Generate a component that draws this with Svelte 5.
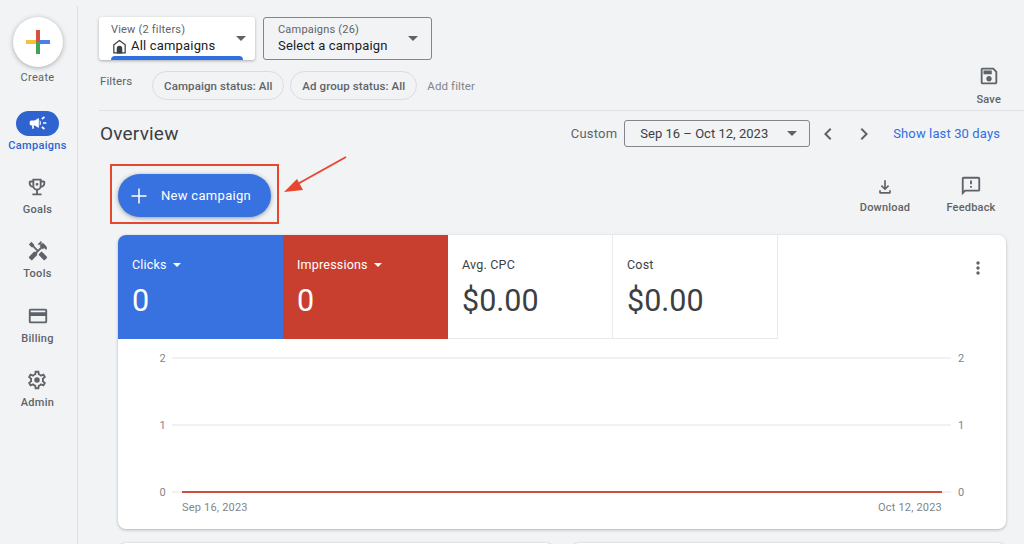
<script>
  const navItems = [
    { label: 'Goals', d: 'M19 5h-2V3H7v2H5c-1.1 0-2 .9-2 2v1c0 2.55 1.92 4.63 4.39 4.94.63 1.5 1.98 2.63 3.61 2.96V19H7v2h10v-2h-4v-3.1c1.63-.33 2.98-1.46 3.61-2.96C19.08 12.63 21 10.55 21 8V7c0-1.1-.9-2-2-2zM5 8V7h2v3.82C5.84 10.4 5 9.3 5 8zm14 0c0 1.3-.84 2.4-2 2.82V7h2v1zM9 5h6v6a3 3 0 0 1-6 0zM12 7.5a1.5 1.5 0 1 0 0 3 1.5 1.5 0 0 0 0-3z' },
    { label: 'Tools', d: 'M21.67 18.17l-5.3-5.3h-.99l-2.54 2.54v.99l5.3 5.3c.39.39 1.02.39 1.41 0l2.12-2.12c.39-.38.39-1.02 0-1.41zM17.34 10.19l1.41-1.41 2.12 2.12c1.17-1.17 1.17-3.07 0-4.24l-3.54-3.54-1.41 1.41V1.71l-.7-.71-3.54 3.54.71.71h2.83l-1.41 1.41 1.06 1.06-2.89 2.89-4.13-4.13V5.06L4.83 2.04 2 4.87 5.03 7.9h1.41l4.13 4.13-.85.85H7.6l-5.3 5.3c-.39.39-.39 1.02 0 1.41l2.12 2.12c.39.39 1.02.39 1.41 0l5.3-5.3v-2.12l5.15-5.15 1.06 1.05z' },
    { label: 'Billing', d: 'M20 4H4c-1.11 0-1.99.89-1.99 2L2 18c0 1.11.89 2 2 2h16c1.11 0 2-.89 2-2V6c0-1.11-.89-2-2-2zm0 14H4v-6h16v6zm0-10H4V6h16v2z' },
    { label: 'Admin', d: 'M19.43 12.98c.04-.32.07-.64.07-.98 0-.34-.03-.66-.07-.98l2.11-1.65c.19-.15.24-.42.12-.64l-2-3.46c-.09-.16-.26-.25-.44-.25-.06 0-.12.01-.17.03l-2.49 1c-.52-.4-1.08-.73-1.69-.98l-.38-2.65C14.46 2.18 14.25 2 14 2h-4c-.25 0-.46.18-.49.42l-.38 2.65c-.61.25-1.17.59-1.69.98l-2.49-1c-.06-.02-.12-.03-.18-.03-.17 0-.34.09-.43.25l-2 3.46c-.13.22-.07.49.12.64l2.11 1.65c-.04.32-.07.65-.07.98 0 .33.03.66.07.98l-2.11 1.65c-.19.15-.24.42-.12.64l2 3.46c.09.16.26.25.44.25.06 0 .12-.01.17-.03l2.49-1c.52.4 1.08.73 1.69.98l.38 2.65c.03.24.24.42.49.42h4c.25 0 .46-.18.49-.42l.38-2.65c.61-.25 1.17-.59 1.69-.98l2.49 1c.06.02.12.03.18.03.17 0 .34-.09.43-.25l2-3.46c.12-.22.07-.49-.12-.64l-2.11-1.65zm-1.98-1.71c.04.31.05.52.05.73 0 .21-.02.43-.05.73l-.14 1.13.89.7 1.08.84-.7 1.21-1.27-.51-1.04-.42-.9.68c-.43.32-.84.56-1.25.73l-1.06.43-.16 1.13-.2 1.35h-1.4l-.19-1.35-.16-1.13-1.06-.43c-.43-.18-.83-.41-1.23-.71l-.91-.7-1.06.43-1.27.51-.7-1.21 1.08-.84.89-.7-.14-1.13c-.03-.31-.05-.54-.05-.74s.02-.43.05-.73l.14-1.13-.89-.7-1.08-.84.7-1.21 1.27.51 1.04.42.9-.68c.43-.32.84-.56 1.25-.73l1.06-.43.16-1.13.2-1.35h1.39l.19 1.35.16 1.13 1.06.43c.43.18.83.41 1.23.71l.91.7 1.06-.43 1.27-.51.7 1.21-1.07.85-.89.7.14 1.13zM12 9a3 3 0 1 0 0 6 3 3 0 0 0 0-6z' }
  ];

  const tiles = [
    { label: 'Clicks', value: '0', cls: 'blue', caret: true },
    { label: 'Impressions', value: '0', cls: 'red', caret: true },
    { label: 'Avg. CPC', value: '$0.00', cls: '', caret: false },
    { label: 'Cost', value: '$0.00', cls: 'last', caret: false }
  ];

  const ticks = [
    { label: '2', y: 19 },
    { label: '1', y: 86 },
    { label: '0', y: 153 }
  ];
</script>

<div class="page">
  <nav class="sidebar">
    <div class="create">
      <div class="create-btn">
        <svg width="26" height="26" viewBox="0 0 26 26">
          <rect x="1" y="11" width="12" height="4" fill="#f6bf3c" />
          <rect x="13" y="11" width="12" height="4" fill="#4a80e8" />
          <rect x="11" y="1" width="4" height="12" fill="#d9503f" />
          <rect x="11" y="13" width="4" height="12" fill="#3fa35c" />
        </svg>
      </div>
      <span>Create</span>
    </div>

    <div class="nav-item active">
      <div class="pill">
        <svg width="20" height="20" viewBox="0 0 24 24" fill="#fff"><path d="M18 11v2h4v-2h-4zm-2 6.61c.96.71 2.21 1.65 3.2 2.39.4-.53.8-1.07 1.2-1.6-.99-.74-2.24-1.68-3.2-2.4-.4.54-.8 1.08-1.2 1.61zM20.4 5.6c-.4-.53-.8-1.07-1.2-1.6-.99.74-2.24 1.68-3.2 2.4.4.53.8 1.07 1.2 1.6.96-.72 2.21-1.65 3.2-2.4zM4 9c-1.1 0-2 .9-2 2v2c0 1.1.9 2 2 2h1v4h2v-4h1l5 3V6L8 9H4zm11.5 3c0-1.33-.58-2.53-1.5-3.35v6.69c.92-.81 1.5-2.01 1.5-3.34z" /></svg>
      </div>
      <span>Campaigns</span>
    </div>

    {#each navItems as item}
      <div class="nav-item">
        <svg width="22" height="22" viewBox="0 0 24 24" fill="#5f6368" fill-rule="evenodd"><path d={item.d} /></svg>
        <span>{item.label}</span>
      </div>
    {/each}
  </nav>

  <main class="content">
    <div class="selectors">
      <div class="selector view">
        <div class="selector-text">
          <small>View (2 filters)</small>
          <div class="selector-value">
            <svg width="17" height="17" viewBox="0 0 24 24" fill="none" stroke="#3c4043" stroke-width="1.8"><path d="M4 21V9.5L12 3.5l8 6V21z" /><path d="M9 21v-6a3 3 0 0 1 6 0v6z" fill="#3c4043" /></svg>
            All campaigns
          </div>
        </div>
        <i class="caret"></i>
        <div class="view-bar"></div>
      </div>
      <div class="selector campaign">
        <div class="selector-text">
          <small>Campaigns (26)</small>
          <div class="selector-value">Select a campaign</div>
        </div>
        <i class="caret"></i>
      </div>
    </div>

    <div class="filter-row">
      <span class="filters-label">Filters</span>
      <span class="chip">Campaign status: All</span>
      <span class="chip">Ad group status: All</span>
      <span class="add-filter">Add filter</span>
      <div class="icon-action save">
        <svg width="22" height="22" viewBox="0 0 24 24" fill="#5f6368"><path d="M17 3H5c-1.11 0-2 .9-2 2v14c0 1.1.89 2 2 2h14c1.1 0 2-.9 2-2V7l-4-4zm2 16H5V5h11.17L19 7.83V19zm-7-7c-1.66 0-3 1.34-3 3s1.34 3 3 3 3-1.34 3-3-1.34-3-3-3zM6 6h9v4H6z" /></svg>
        <span>Save</span>
      </div>
    </div>

    <div class="overview-row">
      <h1>Overview</h1>
      <span class="custom">Custom</span>
      <div class="date-box">
        Sep 16 – Oct 12, 2023
        <i class="caret"></i>
      </div>
      <svg class="chev" width="24" height="24" viewBox="0 0 24 24" fill="#5f6368"><path d="M15.41 7.41 14 6l-6 6 6 6 1.41-1.41L10.83 12z" /></svg>
      <svg class="chev" width="24" height="24" viewBox="0 0 24 24" fill="#5f6368"><path d="M8.59 16.59 10 18l6-6-6-6-1.41 1.41L13.17 12z" /></svg>
      <span class="show-last">Show last 30 days</span>
    </div>

    <div class="actions-row">
      <div class="highlight">
        <button class="new-campaign">
          <svg width="20" height="20" viewBox="0 0 20 20" stroke="#fff" stroke-width="1.5"><path d="M10 2.5v15M2.5 10h15" /></svg>
          New campaign
        </button>
      </div>
      <div class="icon-action download">
        <svg width="20" height="20" viewBox="0 0 24 24" fill="#5f6368"><path d="M12 16l-5-5 1.4-1.4 2.6 2.6V4h2v8.2l2.6-2.6L17 11zM6 20c-.55 0-1-.45-1-1v-3h2v2h10v-2h2v3c0 .55-.45 1-1 1z" /></svg>
        <span>Download</span>
      </div>
      <div class="icon-action feedback">
        <svg width="22" height="22" viewBox="0 0 24 24" fill="#5f6368"><path d="M20 2H4c-1.1 0-1.99.9-1.99 2L2 22l4-4h14c1.1 0 2-.9 2-2V4c0-1.1-.9-2-2-2zm0 14H5.17L4 17.17V4h16v12zM11 12h2v2h-2zm0-6h2v4h-2z" /></svg>
        <span>Feedback</span>
      </div>
    </div>

    <section class="card">
      <div class="tiles">
        {#each tiles as tile}
          <div class="tile {tile.cls}">
            <div class="tile-label">
              {tile.label}
              {#if tile.caret}<i class="caret small"></i>{/if}
            </div>
            <div class="tile-value">{tile.value}</div>
          </div>
        {/each}
        <svg class="more" width="20" height="20" viewBox="0 0 20 20" fill="#5f6368">
          <circle cx="10" cy="5" r="1.7" /><circle cx="10" cy="10" r="1.7" /><circle cx="10" cy="15" r="1.7" />
        </svg>
      </div>
      <svg class="chart" width="888" height="190" viewBox="0 0 888 190">
        {#each ticks as t}
          <line x1="54" x2="833" y1={t.y} y2={t.y} stroke="#e1e3e6" />
          <text x="48" y={t.y + 4} text-anchor="end">{t.label}</text>
          <text x="840" y={t.y + 4}>{t.label}</text>
        {/each}
        <line x1="64" x2="824" y1="153" y2="153" stroke="#cc4f42" stroke-width="2" />
        <text x="64" y="172">Sep 16, 2023</text>
        <text x="824" y="172" text-anchor="end">Oct 12, 2023</text>
      </svg>
    </section>

    <div class="lower-cards">
      <div class="lower"></div>
      <div class="lower"></div>
    </div>

    <svg class="arrow" width="70" height="44" viewBox="0 0 70 44">
      <path d="M66 3 14 32" stroke="#e8472f" stroke-width="2" fill="none" />
      <path d="M4 38 17 25l6 11z" fill="#e8472f" />
    </svg>
  </main>
</div>

<style>
  :global(body) {
    background: #f1f3f5;
  }

  .page {
    display: flex;
    width: 1024px;
    height: 544px;
    overflow: hidden;
    background: #f1f3f5;
    color: #3c4043;
    font-family: Roboto, "Liberation Sans", sans-serif;
  }

  .sidebar {
    width: 75px;
    padding-right: 2px;
    flex-shrink: 0;
    margin-top: 6px;
    border-right: 1px solid #dfe1e5;
    display: flex;
    flex-direction: column;
    align-items: center;
  }

  .create {
    display: flex;
    flex-direction: column;
    align-items: center;
    margin-top: 11px;
    color: #5f6368;
    font-size: 11px;
    letter-spacing: 0.3px;
  }

  .create-btn {
    width: 50px;
    height: 50px;
    border-radius: 50%;
    background: #fff;
    box-shadow: 0 1px 5px rgba(60, 64, 67, 0.4);
    display: flex;
    align-items: center;
    justify-content: center;
    margin-bottom: 4px;
  }

  .nav-item {
    height: 64.4px;
    display: flex;
    flex-direction: column;
    align-items: center;
    justify-content: flex-end;
    gap: 5px;
    color: #5f6368;
    font-size: 11px;
    font-weight: 500;
    letter-spacing: 0.3px;
  }

  .nav-item.active {
    height: 67.5px;
    gap: 3px;
    color: #2f63d0;
  }

  .nav-item span {
    line-height: 13px;
  }

  .pill {
    width: 43px;
    height: 25px;
    border-radius: 13px;
    background: #2f63d0;
    display: flex;
    align-items: center;
    justify-content: center;
  }

  .content {
    position: relative;
    flex: 1;
    min-width: 0;
    padding: 17px 0 0 21px;
  }

  .selectors {
    display: flex;
    gap: 8px;
  }

  .selector {
    position: relative;
    height: 43px;
    box-sizing: border-box;
    display: flex;
    align-items: center;
    justify-content: space-between;
    border-radius: 3px;
    overflow: hidden;
  }

  .view {
    width: 156px;
    background: #fff;
    padding: 0 9px 0 12px;
    box-shadow: 0 1px 3px rgba(60, 64, 67, 0.4);
  }

  .campaign {
    width: 169px;
    border: 1px solid #80868b;
    padding: 0 13px 0 14px;
  }

  .selector-text {
    display: flex;
    flex-direction: column;
    gap: 1px;
    margin-top: 0;
  }

  .selector small {
    font-size: 11px;
    line-height: 14px;
    color: #5f6368;
    letter-spacing: 0.2px;
  }

  .selector-value {
    display: flex;
    align-items: center;
    gap: 3px;
    font-size: 13px;
    line-height: 16px;
    letter-spacing: 0.18px;
    color: #202124;
  }

  .view-bar {
    position: absolute;
    left: 12px;
    right: 12px;
    bottom: 0;
    height: 4px;
    border-radius: 4px 4px 0 0;
    background: #2f6fe0;
  }

  .caret {
    display: inline-block;
    width: 0;
    height: 0;
    border-left: 5px solid transparent;
    border-right: 5px solid transparent;
    border-top: 5px solid #5f6368;
  }

  .caret.small {
    border-left-width: 4.5px;
    border-right-width: 4.5px;
    border-top: 4.5px solid #fff;
    margin-left: 3px;
    vertical-align: 2px;
  }

  .filter-row {
    display: flex;
    align-items: flex-start;
    height: 43px;
    margin-top: 7px;
    padding-right: 23px;
    border-bottom: 1px solid #dfe1e5;
    font-size: 11.5px;
    letter-spacing: 0.1px;
    color: #5f6368;
  }

  .filters-label {
    margin: 7px 20px 0 1px;
    line-height: 14px;
  }

  .chip {
    width: 132px;
    height: 29px;
    box-sizing: border-box;
    margin: 4px 6px 0 0;
    display: flex;
    align-items: center;
    justify-content: center;
    border: 1px solid #dadce0;
    border-radius: 15px;
    font-weight: 500;
    color: #5f6368;
  }

  .chip + .chip {
    width: 127px;
  }

  .add-filter {
    margin: 12px 0 0 4px;
    line-height: 14px;
    color: #80868b;
  }

  .icon-action {
    display: flex;
    flex-direction: column;
    align-items: center;
    gap: 4px;
    font-size: 11px;
    font-weight: 500;
    letter-spacing: 0.2px;
    color: #5f6368;
  }

  .save {
    margin: -2px 0 0 auto;
    gap: 6px;
  }

  .overview-row {
    display: flex;
    align-items: center;
    height: 27px;
    margin-top: 9px;
    padding-right: 24px;
  }

  h1 {
    margin: 0 auto 0 1px;
    font-size: 19px;
    font-weight: 400;
    letter-spacing: 0.2px;
    color: #3c4043;
  }

  .custom {
    font-size: 13px;
    color: #5f6368;
    letter-spacing: 0.2px;
    margin-right: 7px;
  }

  .date-box {
    width: 186px;
    height: 27px;
    box-sizing: border-box;
    padding: 0 12px 0 15px;
    display: flex;
    align-items: center;
    justify-content: space-between;
    border: 1px solid #80868b;
    border-radius: 3px;
    font-size: 13px;
    letter-spacing: 0.02px;
    color: #3c4043;
  }

  .chev {
    margin-left: 6px;
    margin-right: 6px;
  }

  .show-last {
    margin-left: 11px;
    font-size: 13px;
    letter-spacing: 0.12px;
    color: #2f6fe0;
  }

  .actions-row {
    display: flex;
    align-items: flex-start;
    margin-top: 17px;
    padding: 0 27px 0 11px;
  }

  .highlight {
    width: 169px;
    height: 60px;
    box-sizing: border-box;
    border: 2px solid #e8472f;
    padding: 8px 6px;
    margin-right: auto;
  }

  .new-campaign {
    width: 153px;
    height: 43px;
    display: flex;
    align-items: center;
    gap: 12px;
    padding: 0 0 0 11px;
    border: none;
    border-radius: 22px;
    background: #3871e0;
    box-shadow: 0 1px 4px rgba(60, 64, 67, 0.5);
    color: #fff;
    font-family: inherit;
    font-size: 13px;
    font-weight: 400;
    letter-spacing: 0.3px;
  }

  .download {
    margin-top: 13px;
    width: 52px;
    gap: 4px;
  }

  .feedback {
    margin: 11px 0 0 34px;
    width: 52px;
    gap: 4px;
  }

  .card {
    width: 888px;
    height: 294px;
    margin: 11px 0 0 19px;
    border-radius: 8px;
    background: #fff;
    box-shadow: 0 1px 3px rgba(60, 64, 67, 0.35);
    overflow: hidden;
  }

  .tiles {
    position: relative;
    display: flex;
    height: 104px;
  }

  .tile {
    width: 165px;
    box-sizing: border-box;
    padding: 22px 14px 0;
    color: #3c4043;
  }

  .tile.last {
    border-right: 1px solid #e8eaed;
    border-bottom: 1px solid #e8eaed;
  }

  .tile:nth-child(3) {
    border-bottom: 1px solid #e8eaed;
    border-right: 1px solid #e8eaed;
  }

  .tile.blue {
    background: #3871e0;
    color: #fff;
  }

  .tile.red {
    background: #c83f30;
    color: #fff;
  }

  .tile-label {
    font-size: 12.5px;
    line-height: 16px;
    letter-spacing: 0.2px;
  }

  .tile-value {
    margin-top: 10px;
    font-size: 30.5px;
    line-height: 36px;
  }

  .more {
    position: absolute;
    top: 23px;
    right: 18px;
  }

  .chart {
    display: block;
  }

  .chart text {
    font-size: 11px;
    letter-spacing: 0.2px;
    fill: #80868b;
  }

  .lower-cards {
    display: flex;
    gap: 17px;
    margin: 14px 0 0 19px;
    width: 888px;
  }

  .lower {
    flex: 1;
    height: 20px;
    border-radius: 8px 8px 0 0;
    background: #fff;
    box-shadow: 0 0 2px rgba(60, 64, 67, 0.3);
  }

  .arrow {
    position: absolute;
    left: 202px;
    top: 154px;
  }
</style>
